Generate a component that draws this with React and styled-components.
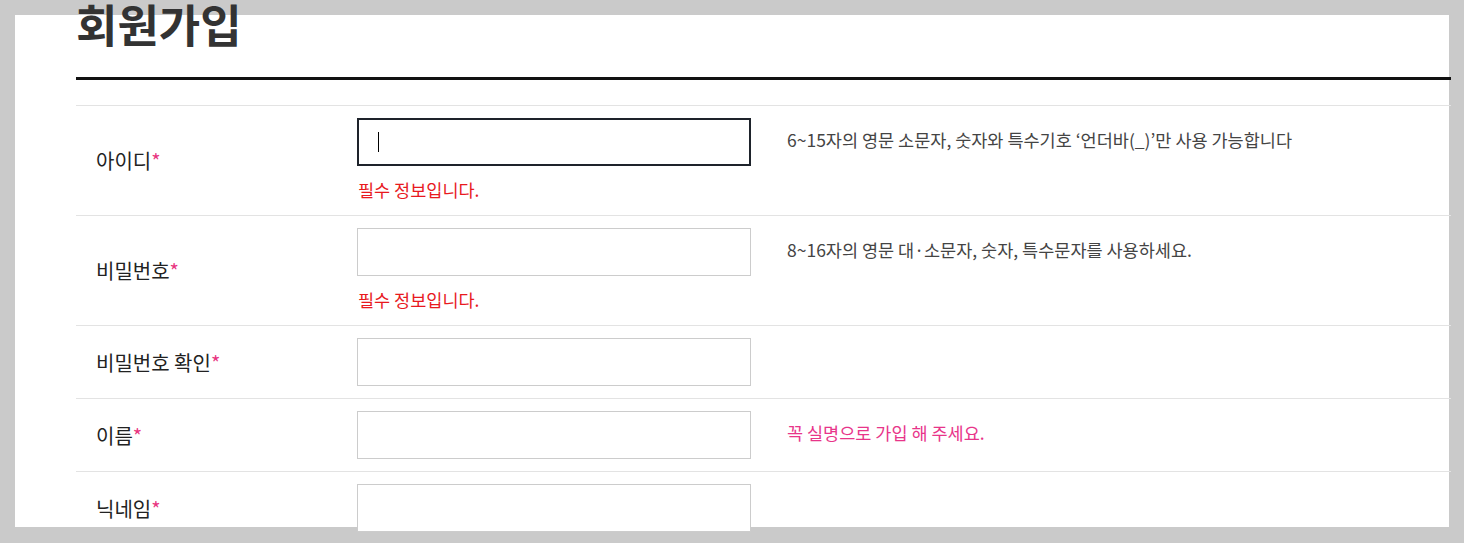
import React from 'react';
import styled, { createGlobalStyle } from 'styled-components';

const GlobalStyle = createGlobalStyle`
  html, body {
    margin: 0;
    padding: 0;
    background: #cacaca;
    overflow: hidden;
  }
  body {
    font-family: "Noto Sans CJK KR", "Noto Sans", sans-serif;
  }
`;

const Page = styled.div`
  padding: 15px;
  height: 543px;
  box-sizing: border-box;
`;

const Panel = styled.div`
  display: flex;
  flex-direction: column;
  width: 1434px;
  height: 512px;
  background: #fff;
`;

const Inner = styled.div`
  width: 1375px;
  margin: -15px 0 0 61px;
`;

const Title = styled.h1`
  margin: 0;
  padding-bottom: 29px;
  font-size: 45px;
  line-height: 48px;
  font-weight: 700;
  color: #333;
  border-bottom: 3px solid #111;
`;

const Form = styled.div`
  margin-top: 25px;
  border-top: 1px solid #e3e3e3;
`;

const Row = styled.div`
  display: grid;
  grid-template-columns: 281px 394px 1fr;
  border-bottom: 1px solid #e3e3e3;
  padding: 12px 0 ${(p) => (p.$error ? '13px' : '12px')};
`;

const Label = styled.div`
  align-self: center;
  padding-left: 20px;
  font-size: 20px;
  color: #222;
`;

const Star = styled.span`
  color: #e8357f;
`;

const Field = styled.div`
  display: flex;
  flex-direction: column;
`;

const InputWrap = styled.div`
  position: relative;
`;

const Input = styled.input`
  display: block;
  box-sizing: border-box;
  width: 394px;
  height: 48px;
  padding: 0 18px;
  border: ${(p) => (p.$focused ? '2px solid #1e232b' : '1px solid #cccccc')};
  outline: none;
  background: #fff;
  font-family: inherit;
  font-size: 17px;
`;

const Caret = styled.span`
  position: absolute;
  left: 21px;
  top: 14px;
  width: 1px;
  height: 20px;
  background: #000;
`;

const ErrorText = styled.div`
  margin-top: 12px;
  font-size: 17.5px;
  line-height: 24px;
  color: #e8191e;
  padding-left: 1px;
`;

const Help = styled.div`
  padding: 10px 0 0 36px;
  font-size: 17.5px;
  line-height: 24px;
  color: ${(p) => (p.$pink ? '#e8358a' : '#444')};
`;

const rows = [
  {
    label: '아이디',
    focused: true,
    error: '필수 정보입니다.',
    help: "6~15자의 영문 소문자, 숫자와 특수기호 ‘언더바(_)’만 사용 가능합니다",
  },
  {
    label: '비밀번호',
    error: '필수 정보입니다.',
    help: '8~16자의 영문 대·소문자, 숫자, 특수문자를 사용하세요.',
  },
  { label: '비밀번호 확인' },
  { label: '이름', help: '꼭 실명으로 가입 해 주세요.', pink: true },
  { label: '닉네임' },
];

export default function App() {
  return (
    <>
      <GlobalStyle />
      <Page>
        <Panel>
          <Inner>
            <Title>회원가입</Title>
            <Form>
              {rows.map((r) => (
                <Row key={r.label} $error={!!r.error}>
                  <Label>
                    {r.label}
                    <Star>*</Star>
                  </Label>
                  <Field>
                    <InputWrap>
                      <Input type="text" $focused={r.focused} />
                      {r.focused && <Caret />}
                    </InputWrap>
                    {r.error && <ErrorText>{r.error}</ErrorText>}
                  </Field>
                  <Help $pink={r.pink}>{r.help}</Help>
                </Row>
              ))}
            </Form>
          </Inner>
        </Panel>
      </Page>
    </>
  );
}
